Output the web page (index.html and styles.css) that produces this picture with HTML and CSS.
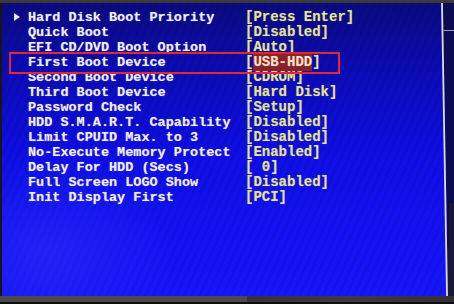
FILE: index.html
```html
<!DOCTYPE html>
<html lang="en">
    <head>
        <meta charset="UTF-8" />
        <meta name="viewport" content="width=device-width, initial-scale=1.0"/>
        <title>BIOS Boot Settings</title>
        <link rel="stylesheet" href="styles.css">
    </head>
    <body>
        <div class="photo">
            <div class="topbar"></div>
            <div class="screen">
                <div class="bios">
                    <div class="row"><span class="label"><span class="arrow"></span>Hard Disk Boot Priority</span><span class="value">[Press Enter]</span></div>
                    <div class="row"><span class="label">Quick Boot</span><span class="value">[Disabled]</span></div>
                    <div class="row"><span class="label">EFI CD/DVD Boot Option</span><span class="value">[Auto]</span></div>
                    <div class="row sel"><span class="label">First Boot Device</span><span class="value">[<span class="hl">USB-HDD</span>]</span></div>
                    <div class="row"><span class="label">Second Boot Device</span><span class="value">[CDROM]</span></div>
                    <div class="row"><span class="label">Third Boot Device</span><span class="value">[Hard Disk]</span></div>
                    <div class="row"><span class="label">Password Check</span><span class="value">[Setup]</span></div>
                    <div class="row"><span class="label">HDD S.M.A.R.T. Capability</span><span class="value">[Disabled]</span></div>
                    <div class="row"><span class="label">Limit CPUID Max. to 3</span><span class="value">[Disabled]</span></div>
                    <div class="row"><span class="label">No-Execute Memory Protect</span><span class="value">[Enabled]</span></div>
                    <div class="row"><span class="label">Delay For HDD (Secs)</span><span class="value">[ 0]</span></div>
                    <div class="row"><span class="label">Full Screen LOGO Show</span><span class="value">[Disabled]</span></div>
                    <div class="row"><span class="label">Init Display First</span><span class="value">[PCI]</span></div>
                </div>
                <div class="edge">
                    <svg width="13" height="293" viewBox="0 0 13 293" preserveAspectRatio="none">
                        <polygon points="2,0 13,0 13,293 7,293" fill="#0b0b52"/>
                        <polygon points="8,200 13,200 13,293 7,293" fill="#1c1c30" opacity="0.8"/>
                        <line x1="13" y1="27.5" x2="2.5" y2="27.5" stroke="#9a9ab8" stroke-width="1"/>
                        <line x1="1" y1="0" x2="6" y2="293" stroke="#dcdcf0" stroke-width="1.8"/>
                    </svg>
                </div>
            </div>
            <div class="bottombar">
                <div class="bar-left"></div>
                <div class="bar-right"></div>
            </div>
        </div>
    </body>
</html>
```

FILE: styles.css
```css
* {
    margin: 0;
    padding: 0;
    box-sizing: border-box;
}

body {
    background: #0e0e0e;
    width: 454px;
    height: 304px;
    overflow: hidden;
}

.photo {
    display: flex;
    flex-direction: column;
    height: 304px;
}

.topbar {
    height: 3px;
    background: #3b3b3b;
}

.screen {
    display: flex;
    height: 293px;
    border-left: 2px solid #161616;
    background:
        radial-gradient(ellipse 180px 140px at 10% 85%, rgba(60,60,255,0.35), rgba(60,60,255,0) 70%),
        repeating-linear-gradient(115deg, rgba(0,0,40,0.08) 0px, rgba(0,0,40,0.08) 3px, rgba(0,0,0,0) 3px, rgba(0,0,0,0) 7px),
        linear-gradient(to bottom, #0a0a80 0%, #0c0cba 25%, #0e0ee4 50%, #1212f4 75%, #1616fb 100%);
}

.bios {
    flex: 1;
    padding: 6.5px 0 0 26px;
    font-family: "Liberation Mono", "DejaVu Sans Mono", monospace;
    font-weight: bold;
}

.row {
    display: flex;
    height: 15.08px;
    line-height: 15.08px;
    white-space: pre;
}

.label {
    width: 217px;
    font-size: 13.5px;
    color: #eeeefa;
    text-shadow: 0 0 1px rgba(255,255,255,0.5);
}

.value {
    font-size: 14px;
    color: #e4e48e;
    text-shadow: 0 0 1px rgba(240,240,150,0.4);
}

.arrow {
    display: inline-block;
    width: 0;
    height: 0;
    margin-left: -14px;
    margin-right: 8px;
    border-top: 4px solid transparent;
    border-bottom: 4px solid transparent;
    border-left: 6px solid #e8e8f0;
    vertical-align: 0;
}

.sel {
    position: relative;
}

.sel::after {
    content: "";
    position: absolute;
    left: -19px;
    top: -2.74px;
    width: 327px;
    height: 18px;
    border: 2px solid #e42630;
}

.hl {
    background: #8e1e2a;
    color: #f4e4c8;
    padding: 1px 0;
}

.edge {
    width: 13px;
}

.edge svg {
    display: block;
}

.bottombar {
    display: flex;
    height: 6px;
}

.bar-left {
    width: 247px;
    background: #4a4a4a;
}

.bar-right {
    flex: 1;
    background: linear-gradient(to right, #333338, #3c3c40 50%, #303034);
}
```
